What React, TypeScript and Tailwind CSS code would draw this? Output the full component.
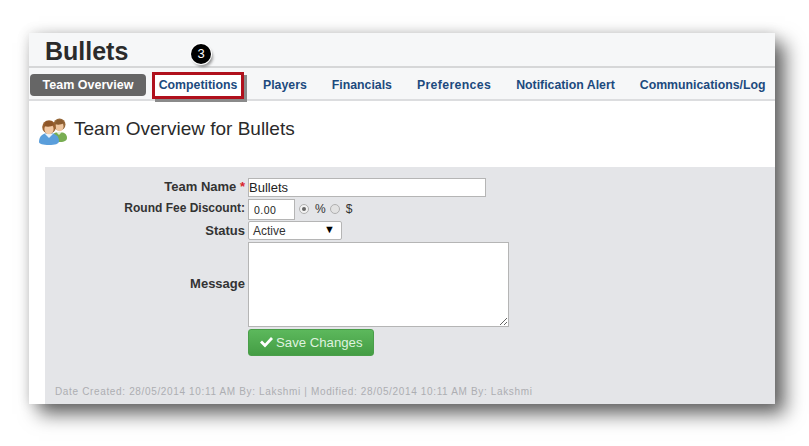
import React from 'react';

const tabs = [
  { label: 'Players', className: '' },
  { label: 'Financials', className: '' },
  { label: 'Preferences', className: 'tracking-[0.35px]' },
  { label: 'Notification Alert', className: '' },
  { label: 'Communications/Log', className: '' },
];

function TeamIcon() {
  return (
    <svg width="28" height="28" viewBox="0 0 28 28" className="shrink-0">
      {/* back person */}
      <path d="M13 22c0-5 2-7 7-7s8 2 8 6c0 2-2 4-7 4s-8-1-8-3z" fill="#78ad52" />
      <path d="M17 15l3 3 3-3z" fill="#e4f0d8" />
      <circle cx="20.500" cy="7.500" r="6" fill="#96683a" />
      <ellipse cx="20.500" cy="9.500" rx="4" ry="4.800" fill="#eec6a0" />
      <path d="M16 7c2 1 6 1 9-1l-2-3h-5z" fill="#8a5c30" />
      {/* front person */}
      <path d="M0 25c0-6 4-9 10-9s10 3 10 8c0 3-4 4-10 4s-10-1-10-3z" fill="#5a9edb" />
      <path d="M6 17l4 4 4-4-4-1z" fill="#e8f2fb" />
      <circle cx="10" cy="10" r="6.800" fill="#9c6230" />
      <ellipse cx="10" cy="12" rx="4.600" ry="5.200" fill="#f2c9a4" />
      <path d="M5 9c3 1 7 1 10-1l-2-4H7z" fill="#8e5628" />
    </svg>
  );
}

export default function App() {
  return (
    <div className="w-[809px] h-[446px] bg-white overflow-hidden pt-[33px] pl-[29px] font-['Liberation_Sans',Arial,sans-serif]">
      <div className="relative w-[746px] h-[371px] bg-white shadow-[10px_10px_18px_rgba(0,0,0,0.6),0_0_12px_rgba(0,0,0,0.14)]">
        <div className="h-[35px] bg-[#f6f7f8] border-b-2 border-[#d6d7d8] pl-4 pt-[3px]">
          <h1 className="text-[25px] leading-[30px] font-bold text-[#2b2b2b]">Bullets</h1>
        </div>

        <div className="absolute left-[162px] top-[11px] w-[20px] h-[20px] rounded-full bg-black text-white text-[13px] leading-[20px] text-center shadow-[0_0_0_1px_#ffffff,2px_3px_3px_rgba(0,0,0,0.4)]">
          3
        </div>

        <nav className="h-[33px] bg-[#f6f7f8] border-b-2 border-[#dcdddf] flex items-center pl-px pt-[3px] text-[12.3px] font-bold text-[#1c4a7e]">
          <span className="w-[116px] h-[22px] rounded-[4px] bg-[#666666] text-white text-[12.5px] text-center leading-[22px]">Team Overview</span>
          <span className="ml-[6px] w-[92px] h-[27px] border-[3px] border-[#b0101c] bg-white text-center leading-[21px] shadow-[3px_3px_0_#8a8a8a]">Competitions</span>
          <div className="flex gap-[25px] ml-[19px]">
            {tabs.map((tab) => (
              <span key={tab.label} className={tab.className}>{tab.label}</span>
            ))}
          </div>
        </nav>

        <div className="flex items-center gap-[7px] pl-[10px] pt-[15px] h-[66px] pb-[21px]">
          <TeamIcon />
          <h2 className="text-[19px] text-[#2a2a2a] mb-[3px]">Team Overview for Bullets</h2>
        </div>

        <div className="ml-4 h-[237px] bg-[#e4e5e8] relative pt-[11px]">
          <div className="grid grid-cols-[200px_1fr] gap-x-[3px] text-[13px] text-[#333333] font-bold">
            <div className="h-[20px] text-right leading-[18px]">
              Team Name <span className="text-[#d9242c]">*</span>
            </div>
            <div className="h-[20px]">
              <input
                readOnly
                value="Bullets"
                className="w-[238px] h-[19px] bg-white border border-[#b5b5b5] text-[13px] font-normal text-[#222] outline-none"
              />
            </div>

            <div className="h-[22px] text-right text-[12px] leading-[20px]">Round Fee Discount:</div>
            <div className="h-[22px] flex items-center text-[12px] font-normal">
              <input
                readOnly
                value="0.00"
                className="w-[47px] h-[21px] bg-white border border-[#b5b5b5] pl-[5px] pt-[2px] text-[10.5px] tracking-[0.5px] text-[#222] outline-none"
              />
              <span className="ml-[4px] w-[10px] h-[10px] rounded-full border border-[#b0b0b0] bg-[#f2f2f2] flex items-center justify-center">
                <span className="w-[4px] h-[4px] rounded-full bg-[#666]" />
              </span>
              <span className="ml-[6px]">%</span>
              <span className="ml-[4px] w-[10px] h-[10px] rounded-full border border-[#b0b0b0] bg-[#e2e2e2]" />
              <span className="ml-[6px]">$</span>
            </div>

            <div className="h-[22px] text-right leading-[20px] pt-[1px]">Status</div>
            <div className="h-[22px] pt-[1px]">
              <div className="w-[94px] h-[19px] bg-white border border-[#b5b5b5] rounded-[2px] flex items-center justify-between pl-[4px] pr-[6px] text-[12px] font-normal">
                <span>Active</span>
                <span className="text-[11px] leading-[11px] text-black mb-[2px]">▼</span>
              </div>
            </div>

            <div className="h-[87px] flex items-center justify-end pb-[4px]">Message</div>
            <div className="h-[87px]">
              <textarea
                readOnly
                className="block w-[261px] h-[85px] bg-white border border-[#b5b5b5] outline-none"
              />
            </div>

            <div />
            <div>
              <button className="w-[126px] h-[27px] rounded-[3px] bg-gradient-to-b from-[#5cb85c] to-[#449d44] border border-[#4a9e4a] text-[#dff2df] text-[13.200px] font-normal flex items-center pl-[10px] pt-[1px] gap-[3px]">
                <svg width="14" height="12" viewBox="0 0 14 12" className="shrink-0 mb-[2px]">
                  <path d="M1 6.500l2-2 3 3 6-6.500 2 2-8 8.500z" fill="#ffffff" />
                </svg>
                Save Changes
              </button>
            </div>
          </div>
          <p className="mt-[28px] pl-[10px] text-[10px] tracking-[0.65px] text-[#adaeb2]">
            Date Created: 28/05/2014 10:11 AM By: Lakshmi | Modified: 28/05/2014 10:11 AM By: Lakshmi
          </p>
        </div>
      </div>
    </div>
  );
}
